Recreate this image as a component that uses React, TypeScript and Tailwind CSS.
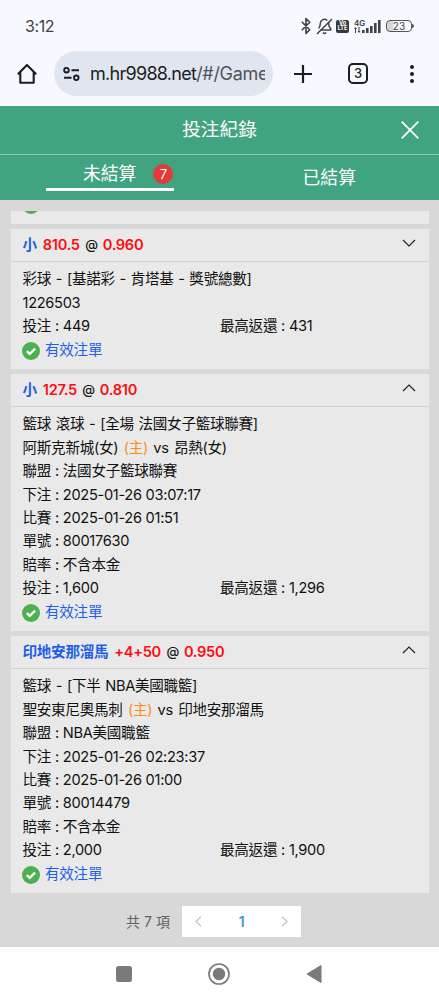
import type { ReactNode } from 'react';
import { Bluetooth, BellOff } from 'lucide-react';

type Bet = {
    pick: string;
    line: string;
    odds: string;
    open: boolean;
    title: string;
    teams?: ReactNode;
    rows: string[];
    stake: string;
    payout: string;
};

const Home = () => <span className="text-[#ff8c1a]">(主)</span>;

const bets: Bet[] = [
    {
        pick: '小',
        line: '810.5',
        odds: '0.960',
        open: false,
        title: '彩球 - [基諾彩 - 肯塔基 - 獎號總數]',
        rows: ['1226503'],
        stake: '449',
        payout: '431',
    },
    {
        pick: '小',
        line: '127.5',
        odds: '0.810',
        open: true,
        title: '籃球 滾球 - [全場 法國女子籃球聯賽]',
        teams: <>阿斯克新城(女) <Home /> vs 昂熱(女)</>,
        rows: [
            '聯盟 : 法國女子籃球聯賽',
            '下注 : 2025-01-26 03:07:17',
            '比賽 : 2025-01-26 01:51',
            '單號 : 80017630',
            '賠率 : 不含本金',
        ],
        stake: '1,600',
        payout: '1,296',
    },
    {
        pick: '印地安那溜馬',
        line: '+4+50',
        odds: '0.950',
        open: true,
        title: '籃球 - [下半 NBA美國職籃]',
        teams: <>聖安東尼奧馬刺 <Home /> vs 印地安那溜馬</>,
        rows: [
            '聯盟 : NBA美國職籃',
            '下注 : 2025-01-26 02:23:37',
            '比賽 : 2025-01-26 01:00',
            '單號 : 80014479',
            '賠率 : 不含本金',
        ],
        stake: '2,000',
        payout: '1,900',
    },
];

function StatusBar() {
    return (
        <div className="flex h-[51px] items-center justify-between pl-[25px] pr-[25px] pt-px text-[#414246]">
            <span className="text-[16px] tracking-[-0.4px]">3:12</span>
            <div className="flex items-center">
                <Bluetooth className="mr-[1px] h-[18px] w-[18px]" strokeWidth={2.2} />
                <BellOff className="mr-[3px] h-[17px] w-[17px] -scale-x-100" strokeWidth={2.1} />
                <div className="mr-[5px] flex h-[13px] w-[13px] flex-col items-center justify-center rounded-[2px] bg-[#38393d] text-[5.5px] font-bold leading-[5.5px] text-white">
                    <span>Vo</span>
                    <span>LTE</span>
                </div>
                <svg width="27" height="14" viewBox="0 0 27 14" fill="currentColor" className="mr-[5px]">
                    <text x="0" y="6.5" fontSize="8" fontWeight="600" fontFamily="Inter">4G</text>
                    <path d="M0 10l1.5-2L3 10H2v4H1v-4zM3.5 12h1V8h1v4h1L5 14z" />
                    <rect x="8" y="11" width="2.6" height="3" />
                    <rect x="12" y="9" width="2.6" height="5" />
                    <rect x="16" y="7" width="2.6" height="7" />
                    <rect x="20" y="4" width="2.6" height="10" />
                    <rect x="24" y="1" width="2.6" height="13" />
                </svg>
                <div className="flex h-[12px] w-[26px] items-center justify-center rounded-[4px] border border-[#55565a] bg-linear-to-r from-[#d5d6da] from-25% to-transparent to-25% text-[10px] leading-none">
                    23
                </div>
                <div className="h-[4px] w-[2px] rounded-r bg-[#55565a]" />
            </div>
        </div>
    );
}

function AddressBar() {
    return (
        <div className="flex h-[55px] items-start text-[#1c1d20]">
            <svg width="20" height="22" viewBox="0 0 20 22" fill="none" stroke="currentColor" strokeWidth="2.1" className="ml-[17px] mt-[12px]">
                <path d="M.8 11.2L10 2l9.2 9.2M3.3 9v10.8h13.4V9" strokeLinejoin="round" />
            </svg>
            <div className="ml-[17px] flex h-[45px] w-[219px] items-center rounded-full bg-[#dfe6ef] pl-[9px]">
                <svg width="17" height="14" viewBox="0 0 17 14" fill="none" stroke="currentColor" strokeWidth="1.9">
                    <circle cx="3.5" cy="3.2" r="2.3" />
                    <path d="M8.5 3.2H16M1 10.8h7.5" />
                    <circle cx="13.3" cy="10.8" r="2.3" />
                </svg>
                <div className="ml-[10px] w-[175px] overflow-hidden whitespace-nowrap text-[18px] leading-6 tracking-[-0.72px]">
                    m.hr9988.net<span className="tracking-[-0.3px] text-[#505358]">/#/Game</span>
                </div>
            </div>
            <svg width="18" height="18" viewBox="0 0 18 18" stroke="currentColor" strokeWidth="2.2" className="ml-[21px] mt-[14px]">
                <path d="M9 0v18M0 9h18" />
            </svg>
            <div className="ml-[36px] mt-[12px] flex h-[21px] w-[20px] items-center justify-center rounded-[5px] border-2 border-[#1c1d20] text-[13px] font-medium leading-none">
                3
            </div>
            <div className="ml-[41.5px] mt-[13.5px] flex flex-col gap-[2.6px]">
                <i className="h-[4.6px] w-[4.6px] rounded-full bg-[#1c1d20]" />
                <i className="h-[4.6px] w-[4.6px] rounded-full bg-[#1c1d20]" />
                <i className="h-[4.6px] w-[4.6px] rounded-full bg-[#1c1d20]" />
            </div>
        </div>
    );
}

function ValidMark() {
    return (
        <div className="flex h-[24.8px] shrink-0 items-center text-[#1f5fe8]">
            <svg width="18" height="18" viewBox="0 0 18 18" className="mr-[5px] -ml-[0.5px]">
                <circle cx="9" cy="9" r="9" fill="#4caf50" />
                <path d="M4.8 9.1l2.9 2.8 5.4-5.3" fill="none" stroke="#fff" strokeWidth="2.3" />
            </svg>
            有效注單
        </div>
    );
}

function BetCard({ bet }: { bet: Bet }) {
    return (
        <div className="bg-[#e9e9e9] shadow-[0_0_2px_#e0e0e0]">
            <div className="flex h-[33px] items-center border-b border-[#d3d3d3] pl-[11.5px] pr-[13px] pt-[1.4px] font-semibold">
                <span className="mr-[6px] text-[#1f5fe8]">{bet.pick}</span>
                <span className="text-[#fb0d12]">{bet.line}</span>
                <span className="mb-px ml-[5.5px] mr-[5px] text-[13px] font-medium">@</span>
                <span className="text-[#fb0d12]">{bet.odds}</span>
                <svg width="14" height="8" viewBox="0 0 14 8" fill="none" stroke="#222" strokeWidth="1.2" className="mb-[5px] ml-auto">
                    <path d={bet.open ? 'M1 7l6-6 6 6' : 'M1 1l6 6 6-6'} />
                </svg>
            </div>
            <div className="pb-[5.2px] pl-[11.5px] pr-[12px] pt-[6.3px] leading-[23.4px]">
                <div className="[word-spacing:0.9px]">{bet.title}</div>
                {bet.teams && <div className="[word-spacing:1.5px]">{bet.teams}</div>}
                {bet.rows.map((row) => (
                    <div key={row}>{row}</div>
                ))}
                <div className="flex">
                    <div className="w-[197.5px]">投注 : {bet.stake}</div>
                    <div>最高返還 : {bet.payout}</div>
                </div>
                <ValidMark />
            </div>
        </div>
    );
}

export default function App() {
    return (
        <div className="flex h-[1000px] w-[439px] flex-col overflow-hidden bg-[#f8f9fe] font-['Inter','Noto_Sans_CJK_TC',sans-serif] text-[#111]">
            <StatusBar />
            <AddressBar />

            <header className="h-[94px] shrink-0 bg-[#41a481] text-white">
                <div className="grid h-[49px] grid-cols-[40px_1fr_40px] items-center border-b border-[#8dc8b2] text-[18.7px]">
                    <span />
                    <h1 className="text-center">投注紀錄</h1>
                    <svg width="18" height="18" viewBox="0 0 18 18" stroke="#fff" strokeWidth="1.7" className="ml-[2px]">
                        <path d="M.7.7l16.6 16.6M17.3.7L.7 17.3" />
                    </svg>
                </div>
                <div className="grid h-[45px] grid-cols-2 text-[17.8px]">
                    <div className="ml-[46px] flex h-[36px] w-[128px] items-center border-b-[3px] border-white pl-[37px] pt-[5px]">
                        <span className="pt-px">未結算</span>
                        <span className="ml-[17px] flex h-[20px] w-[20px] items-center justify-center rounded-full bg-[#e03c3a] font-['Inter'] text-[13px] leading-none">7</span>
                    </div>
                    <div className="flex items-center justify-center pt-px">已結算</div>
                </div>
            </header>

            <main className="h-[747px] shrink-0 overflow-hidden bg-[#d8d8d8] pl-[11px] pr-[10.5px] pt-[11px] text-[14.6px] tracking-[-0.3px] [word-spacing:0.1px]">
                {/* tail of the card scrolled under the header */}
                <div className="flex h-[12.5px] flex-col justify-end overflow-hidden bg-[#e9e9e9] pb-[6px] pl-[11.5px]">
                    <ValidMark />
                </div>
                <div className="mt-[5.5px] flex flex-col gap-[5.5px]">
                    {bets.map((bet) => (
                        <BetCard key={bet.odds} bet={bet} />
                    ))}
                </div>
                <div className="mt-[13px] flex h-[31px] items-center pl-[115px] text-[#606266]">
                    <span className="w-[56px] text-[14px] tracking-[0px]">共 7 項</span>
                    <div className="flex h-full w-[119px] items-center justify-between bg-white px-[13px]">
                        <svg width="7" height="11" viewBox="0 0 7 11" fill="none" stroke="#c0c4cc" strokeWidth="1.3">
                            <path d="M6 .8L1 5.5l5 4.7" />
                        </svg>
                        <span className="text-[14px] font-semibold text-[#3f95d9]">1</span>
                        <svg width="7" height="11" viewBox="0 0 7 11" fill="none" stroke="#c0c4cc" strokeWidth="1.3">
                            <path d="M1 .8l5 4.7-5 4.7" />
                        </svg>
                    </div>
                </div>
            </main>

            <nav className="flex h-[53px] shrink-0 items-center bg-white pl-[116px] text-[#7a7a7a]">
                <div className="h-[16px] w-[16px] rounded-[2.5px] bg-[#7a7a7a]" />
                <svg width="22" height="22" viewBox="0 0 22 22" className="ml-[76px]">
                    <circle cx="11" cy="11" r="10" fill="none" stroke="currentColor" strokeWidth="1.7" />
                    <circle cx="11" cy="11" r="6.2" fill="currentColor" />
                </svg>
                <svg width="16" height="20" viewBox="0 0 16 20" fill="currentColor" stroke="currentColor" strokeLinejoin="round" className="ml-[76px]">
                    <path d="M15 1.5v17L1 10z" />
                </svg>
            </nav>
        </div>
    );
}
